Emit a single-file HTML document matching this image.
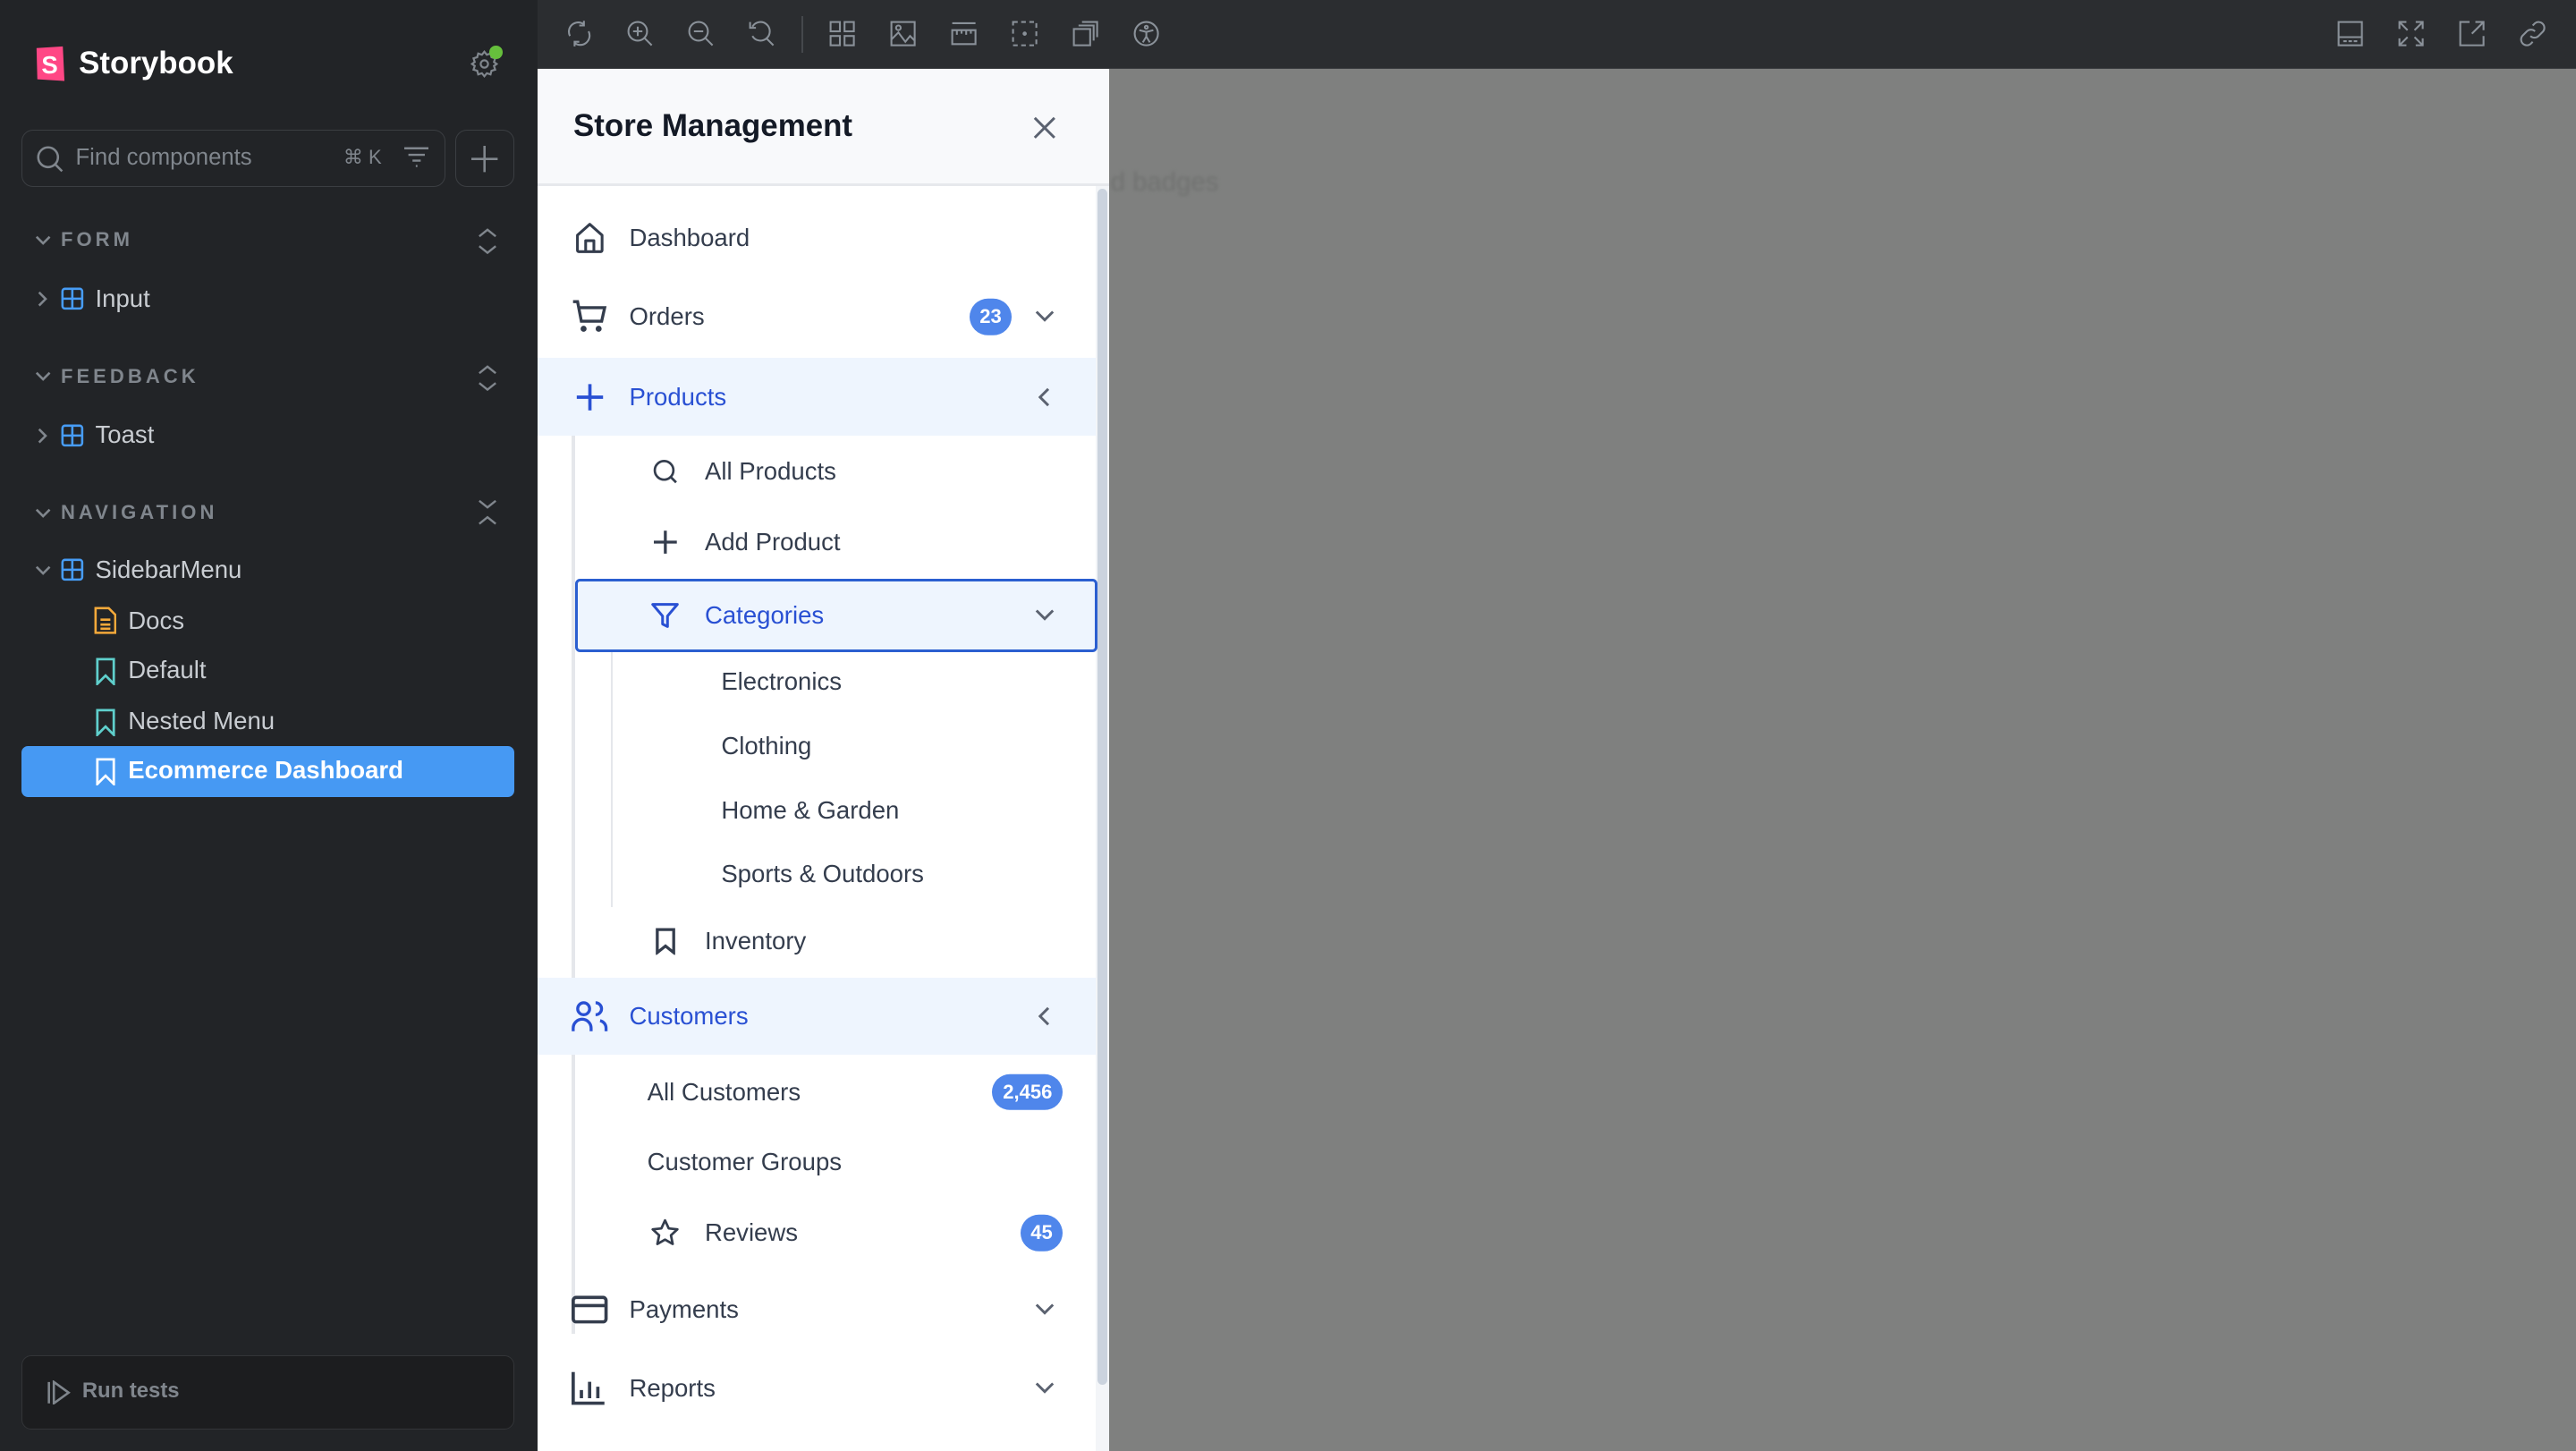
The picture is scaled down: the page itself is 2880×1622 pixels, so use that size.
<!DOCTYPE html>
<html><head><meta charset="utf-8"><style>
*{box-sizing:border-box}
body{margin:0;background:#7f807f;overflow:hidden}
#r{zoom:1.836735;width:1568px;height:883px;position:relative;overflow:hidden;font-family:"Liberation Sans",sans-serif;background:#7f807f}
.abs{position:absolute}
#side{left:0;top:0;width:327px;height:883px;background:#222427}
#tb{left:327px;top:0;width:1241px;height:42px;background:#2b2d30;border-bottom:1px solid #3a3c3f}
.ti{position:absolute;top:12px;width:17px;height:17px}
svg{display:block}
.sec{position:absolute;left:37px;font-size:12px;font-weight:bold;letter-spacing:2.2px;color:#80868d}
.it{position:absolute;font-size:15px;color:#c9cdd2}
#panel{left:327px;top:42px;width:348px;height:841px;background:#fff}
#ph{position:absolute;left:0;top:0;width:348px;height:71px;background:#f8f9fb;border-bottom:2px solid #e6e8ec}
.m{position:absolute;left:0;width:340px;font-size:15px;color:#343d4d}
.m .tx{position:absolute;top:50%;transform:translateY(-50%)}
.m svg{position:absolute;top:50%;transform:translateY(-50%)}
.act{background:#eef5fe;color:#2950d3}
.badge{position:absolute;top:50%;transform:translateY(-50%);background:#4f86eb;color:#fff;font-weight:bold;font-size:12px;border-radius:12px;height:22px;line-height:22px;text-align:center}
</style></head><body><div id="r">

<!-- left sidebar -->
<div id="side" class="abs">
 <svg class="abs" style="left:21px;top:28px" width="20" height="22" viewBox="0 0 20 22"><path d="M1 1.5 L17 0.5 L18 21.5 L1.5 20.5Z" fill="#ff4785"/><text x="4" y="17" font-family="Liberation Sans" font-weight="bold" font-size="15" fill="#fff">S</text></svg>
 <div class="abs" style="left:48px;top:28px;font-size:19px;font-weight:bold;color:#fff">Storybook</div>
 <svg class="abs" style="left:286px;top:30px" width="18" height="18" viewBox="0 0 24 24" fill="none" stroke="#80868d" stroke-width="1.6"><circle cx="12" cy="12" r="3"/><path d="M12 2l2 2.5 3-1 .8 3 3 .9-1 3L22 12l-2.2 1.6 1 3-3 .9-.8 3-3-1L12 22l-2-2.5-3 1-.8-3-3-.9 1-3L2 12l2.2-1.6-1-3 3-.9.8-3 3 1z"/></svg>
 <div class="abs" style="left:298px;top:28px;width:8px;height:8px;border-radius:50%;background:#66bf3c"></div>
 <div class="abs" style="left:13px;top:79px;width:258px;height:35px;border:1px solid #3b3e42;border-radius:7px"></div>
 <svg class="abs" style="left:22px;top:88px" width="17" height="17" viewBox="0 0 17 17" fill="none" stroke="#80868d" stroke-width="1.4"><circle cx="7.5" cy="7.5" r="6"/><path d="M12 12l4 4"/></svg>
 <div class="abs" style="left:46px;top:88px;font-size:14px;color:#80868d">Find components</div>
 <div class="abs" style="left:209px;top:89px;font-size:12px;color:#80868d">⌘ K</div>
 <svg class="abs" style="left:246px;top:89px" width="15" height="13" viewBox="0 0 15 13" stroke="#80868d" stroke-width="1.3"><path d="M0 1.5h15M2.5 5.5h10M5 9h5M7 12.3h1"/></svg>
 <div class="abs" style="left:277px;top:79px;width:36px;height:35px;border:1px solid #3b3e42;border-radius:7px"></div>
 <svg class="abs" style="left:287px;top:89px" width="16" height="16" stroke="#80868d" stroke-width="1.4"><path d="M8 0v16M0 8h16"/></svg>

 <svg class="abs" style="left:21px;top:142px" width="10" height="8" fill="none" stroke="#80868d" stroke-width="1.4"><path d="M1 2l4 4 4-4"/></svg>
 <div class="sec" style="top:139px">FORM</div>
 <svg class="abs" style="left:291px;top:139px" width="12" height="16" fill="none" stroke="#80868d" stroke-width="1.3"><path d="M1 5l5-4 5 4M1 11l5 4 5-4"/></svg>
 <svg class="abs" style="left:22px;top:177px" width="8" height="10" fill="none" stroke="#80868d" stroke-width="1.4"><path d="M2 1l4 4-4 4"/></svg>
 <svg class="abs" style="left:37px;top:175px" width="14" height="14" fill="none" stroke="#479cf5" stroke-width="1.4"><rect x="1" y="1" width="12" height="12" rx="1.5"/><path d="M7 1v12M1 7h12"/></svg>
 <div class="it" style="left:58px;top:173px">Input</div>

 <svg class="abs" style="left:21px;top:225px" width="10" height="8" fill="none" stroke="#80868d" stroke-width="1.4"><path d="M1 2l4 4 4-4"/></svg>
 <div class="sec" style="top:222px">FEEDBACK</div>
 <svg class="abs" style="left:291px;top:222px" width="12" height="16" fill="none" stroke="#80868d" stroke-width="1.3"><path d="M1 5l5-4 5 4M1 11l5 4 5-4"/></svg>
 <svg class="abs" style="left:22px;top:260px" width="8" height="10" fill="none" stroke="#80868d" stroke-width="1.4"><path d="M2 1l4 4-4 4"/></svg>
 <svg class="abs" style="left:37px;top:258px" width="14" height="14" fill="none" stroke="#479cf5" stroke-width="1.4"><rect x="1" y="1" width="12" height="12" rx="1.5"/><path d="M7 1v12M1 7h12"/></svg>
 <div class="it" style="left:58px;top:256px">Toast</div>

 <svg class="abs" style="left:21px;top:308px" width="10" height="8" fill="none" stroke="#80868d" stroke-width="1.4"><path d="M1 2l4 4 4-4"/></svg>
 <div class="sec" style="top:305px">NAVIGATION</div>
 <svg class="abs" style="left:291px;top:304px" width="12" height="16" fill="none" stroke="#80868d" stroke-width="1.3"><path d="M1 1l5 4 5-4M1 15l5-4 5 4"/></svg>
 <svg class="abs" style="left:21px;top:343px" width="10" height="8" fill="none" stroke="#80868d" stroke-width="1.4"><path d="M1 2l4 4 4-4"/></svg>
 <svg class="abs" style="left:37px;top:340px" width="14" height="14" fill="none" stroke="#479cf5" stroke-width="1.4"><rect x="1" y="1" width="12" height="12" rx="1.5"/><path d="M7 1v12M1 7h12"/></svg>
 <div class="it" style="left:58px;top:338px">SidebarMenu</div>
 <svg class="abs" style="left:57px;top:369px" width="14" height="17" fill="none" stroke="#f4a93a" stroke-width="1.4"><path d="M1 1h8l4 4v11H1z M4 8h6M4 11h6M4 13.5h6"/></svg>
 <div class="it" style="left:78px;top:369px">Docs</div>
 <svg class="abs" style="left:58px;top:400px" width="12" height="17" fill="none" stroke="#5fcfcc" stroke-width="1.5"><path d="M1 1h10v15l-5-5-5 5z"/></svg>
 <div class="it" style="left:78px;top:399px">Default</div>
 <svg class="abs" style="left:58px;top:431px" width="12" height="17" fill="none" stroke="#5fcfcc" stroke-width="1.5"><path d="M1 1h10v15l-5-5-5 5z"/></svg>
 <div class="it" style="left:78px;top:430px">Nested Menu</div>
 <div class="abs" style="left:13px;top:454px;width:300px;height:31px;background:#4699f3;border-radius:4px"></div>
 <svg class="abs" style="left:58px;top:461px" width="12" height="17" fill="none" stroke="#fff" stroke-width="1.5"><path d="M1 1h10v15l-5-5-5 5z"/></svg>
 <div class="it" style="left:78px;top:460px;color:#fff;font-weight:bold">Ecommerce Dashboard</div>

 <div class="abs" style="left:13px;top:825px;width:300px;height:45px;background:#1c1d1f;border:1px solid #333538;border-radius:6px"></div>
 <svg class="abs" style="left:28px;top:840px" width="16" height="15" fill="none" stroke="#80868d" stroke-width="1.4"><path d="M2 1v13M5 1l9 6.5L5 14z"/></svg>
 <div class="abs" style="left:50px;top:839px;font-size:13px;font-weight:bold;color:#80868d">Run tests</div>
</div>

<!-- toolbar -->
<div id="tb" class="abs">
 <svg class="ti" style="left:17px" viewBox="0 0 24 24" fill="none" stroke="#8a9199" stroke-width="1.6"><path d="M4 14a8 8 0 0 1 12-10M20 10a8 8 0 0 1-12 10M16 1v4h-4M8 23v-4h4"/></svg>
 <svg class="ti" style="left:54px" viewBox="0 0 24 24" fill="none" stroke="#8a9199" stroke-width="1.6"><circle cx="10" cy="10" r="8"/><path d="M16 16l6 6M10 6v8M6 10h8"/></svg>
 <svg class="ti" style="left:91px" viewBox="0 0 24 24" fill="none" stroke="#8a9199" stroke-width="1.6"><circle cx="10" cy="10" r="8"/><path d="M16 16l6 6M6 10h8"/></svg>
 <svg class="ti" style="left:128px" viewBox="0 0 24 24" fill="none" stroke="#8a9199" stroke-width="1.6"><path d="M4 6a8 8 0 1 1 0 8M16 16l6 6M2 2v5h5"/></svg>
 <div class="abs" style="left:161px;top:10px;width:1px;height:22px;background:#45484c"></div>
 <svg class="ti" style="left:177px" viewBox="0 0 24 24" fill="none" stroke="#8a9199" stroke-width="1.6"><rect x="2" y="2" width="8" height="8"/><rect x="14" y="2" width="8" height="8"/><rect x="2" y="14" width="8" height="8"/><rect x="14" y="14" width="8" height="8"/></svg>
 <svg class="ti" style="left:214px" viewBox="0 0 24 24" fill="none" stroke="#8a9199" stroke-width="1.6"><rect x="2" y="2" width="20" height="20"/><circle cx="8" cy="7" r="2"/><path d="M2 17l6-6 6 8 4-5 4 4"/></svg>
 <svg class="ti" style="left:251px" viewBox="0 0 24 24" fill="none" stroke="#8a9199" stroke-width="1.6"><path d="M2 3h20M2 9h20v12H2zM6 9v4M10 9v3M14 9v4M18 9v3"/></svg>
 <svg class="ti" style="left:288px" viewBox="0 0 24 24" fill="none" stroke="#8a9199" stroke-width="1.6" stroke-dasharray="4 3"><rect x="2" y="2" width="20" height="20"/><circle cx="12" cy="12" r="1" fill="#8a9199" stroke-dasharray="0"/></svg>
 <svg class="ti" style="left:325px" viewBox="0 0 24 24" fill="none" stroke="#8a9199" stroke-width="1.6"><rect x="2" y="8" width="14" height="14"/><path d="M6 5h13v13M9 2h13v13"/></svg>
 <svg class="ti" style="left:362px" viewBox="0 0 24 24" fill="none" stroke="#8a9199" stroke-width="1.6"><circle cx="12" cy="12" r="10"/><circle cx="12" cy="6.5" r="1.3"/><path d="M6 9l6 1.5 6-1.5M12 10.5v4l-3 5M12 14.5l3 5"/></svg>
 <svg class="ti" style="left:1095px" viewBox="0 0 24 24" fill="none" stroke="#8a9199" stroke-width="1.6"><rect x="2" y="2" width="20" height="20"/><path d="M2 15h20M6 18.5h3M10.5 18.5h3M15 18.5h3"/></svg>
 <svg class="ti" style="left:1132px" viewBox="0 0 24 24" fill="none" stroke="#8a9199" stroke-width="1.6"><path d="M2 2l7 7M22 2l-7 7M2 22l7-7M22 22l-7-7M2 8V2h6M16 2h6v6M2 16v6h6M22 16v6h-6"/></svg>
 <svg class="ti" style="left:1169px" viewBox="0 0 24 24" fill="none" stroke="#8a9199" stroke-width="1.6"><path d="M10 2H2v20h20v-8M12 12L22 2M15 2h7v7"/></svg>
 <svg class="ti" style="left:1206px" viewBox="0 0 24 24" fill="none" stroke="#8a9199" stroke-width="1.6"><path d="M10 14a5 5 0 0 0 7 0l4-4a5 5 0 0 0-7-7l-2 2M14 10a5 5 0 0 0-7 0l-4 4a5 5 0 0 0 7 7l2-2"/></svg>
</div>

<div class="abs" style="left:676px;top:102px;font-size:16px;color:#707170;filter:blur(1px)">d badges</div>

<!-- panel -->
<div id="panel" class="abs">
 <div id="ph">
  <div class="abs" style="left:22px;top:24px;font-size:19px;font-weight:bold;color:#141a26">Store Management</div>
  <svg class="abs" style="left:302px;top:29px" width="14" height="14" stroke="#5b6270" stroke-width="1.6"><path d="M1 1l12 12M13 1L1 13"/></svg>
 </div>
 <div class="abs" style="left:340px;top:71px;width:8px;height:770px;background:#f3f5f8"></div>
 <div class="abs" style="left:341px;top:73px;width:6px;height:728px;border-radius:3px;background:#cbd3de"></div>
 <div class="abs" style="left:21px;top:223px;width:2px;height:330px;background:#e5e7eb"></div>
 <div class="abs" style="left:21px;top:600px;width:2px;height:170px;background:#e5e7eb"></div>
 <div class="abs" style="left:45px;top:355px;width:1px;height:155px;background:#e5e7eb"></div>

 <div class="m" style="top:79px;height:48px"><svg style="left:22px" width="20" height="20" viewBox="0 0 24 24" fill="none" stroke="#343d4d" stroke-width="2" stroke-linejoin="round"><path d="M3 10l9-8 9 8v11a1 1 0 0 1-1 1H4a1 1 0 0 1-1-1z M9 22v-8h6v8"/></svg><span class="tx" style="left:56px">Dashboard</span></div>
 <div class="m" style="top:127px;height:48px"><svg style="left:21px" width="22" height="22" viewBox="0 0 24 24" fill="none" stroke="#343d4d" stroke-width="2"><path d="M1 2h3l2.5 13H20l2-9H5"/><circle cx="8" cy="20" r="1" fill="#343d4d"/><circle cx="18" cy="20" r="1" fill="#343d4d"/></svg><span class="tx" style="left:56px">Orders</span><span class="badge" style="left:263px;width:26px">23</span><svg style="left:303px" width="12" height="8" fill="none" stroke="#5b6270" stroke-width="1.6"><path d="M1 1l5 5 5-5"/></svg></div>
 <div class="m act" style="top:176px;height:47px"><svg style="left:23px" width="18" height="18" stroke="#2950d3" stroke-width="2"><path d="M9 1v16M1 9h16"/></svg><span class="tx" style="left:56px">Products</span><svg style="left:305px" width="8" height="12" fill="none" stroke="#5b6270" stroke-width="1.6"><path d="M6 1L1 6l5 5"/></svg></div>
 <div class="m" style="top:224px;height:42px"><svg style="left:70px" width="16" height="16" viewBox="0 0 24 24" fill="none" stroke="#343d4d" stroke-width="2.2"><circle cx="11" cy="11" r="8.5"/><path d="M17 17l5 5"/></svg><span class="tx" style="left:102px">All Products</span></div>
 <div class="m" style="top:267px;height:42px"><svg style="left:71px" width="14" height="14" stroke="#343d4d" stroke-width="1.8"><path d="M7 0v14M0 7h14"/></svg><span class="tx" style="left:102px">Add Product</span></div>
 <div class="abs act" style="left:23px;top:310px;width:318px;height:45px;border:2px solid #2b5fd0;border-radius:3px"></div>
 <div class="m" style="top:310px;height:45px;color:#2950d3"><svg style="left:69px" width="18" height="18" viewBox="0 0 24 24" fill="none" stroke="#2950d3" stroke-width="2.2" stroke-linejoin="round"><path d="M2 3h20l-8 9.5V21l-4-2v-6.5z"/></svg><span class="tx" style="left:102px">Categories</span><svg style="left:303px" width="12" height="8" fill="none" stroke="#5b6270" stroke-width="1.6"><path d="M1 1l5 5 5-5"/></svg></div>
 <div class="m" style="top:353px;height:40px"><span class="tx" style="left:112px">Electronics</span></div>
 <div class="m" style="top:392px;height:40px"><span class="tx" style="left:112px">Clothing</span></div>
 <div class="m" style="top:431px;height:40px"><span class="tx" style="left:112px">Home &amp; Garden</span></div>
 <div class="m" style="top:470px;height:40px"><span class="tx" style="left:112px">Sports &amp; Outdoors</span></div>
 <div class="m" style="top:510px;height:42px"><svg style="left:72px" width="12" height="16" fill="none" stroke="#343d4d" stroke-width="1.8"><path d="M1 1h10v14l-5-4-5 4z"/></svg><span class="tx" style="left:102px">Inventory</span></div>
 <div class="m act" style="top:553px;height:47px"><svg style="left:21px" width="22" height="20" viewBox="0 0 24 22" fill="none" stroke="#2950d3" stroke-width="2"><circle cx="8" cy="6" r="4"/><path d="M1 21v-2a6 6 0 0 1 12 0v2M16 2a4 4 0 0 1 0 8M19 14a5 5 0 0 1 4 5v2"/></svg><span class="tx" style="left:56px">Customers</span><svg style="left:305px" width="8" height="12" fill="none" stroke="#5b6270" stroke-width="1.6"><path d="M6 1L1 6l5 5"/></svg></div>
 <div class="m" style="top:601px;height:43px"><span class="tx" style="left:67px">All Customers</span><span class="badge" style="left:277px;width:43px">2,456</span></div>
 <div class="m" style="top:644px;height:43px"><span class="tx" style="left:67px">Customer Groups</span></div>
 <div class="m" style="top:687px;height:43px"><svg style="left:69px" width="18" height="18" viewBox="0 0 24 24" fill="none" stroke="#343d4d" stroke-width="2" stroke-linejoin="round"><path d="M12 2l3 6.5 7 .8-5.2 4.8 1.4 7L12 17.6 5.8 21.1l1.4-7L2 9.3l7-.8z"/></svg><span class="tx" style="left:102px">Reviews</span><span class="badge" style="left:294px;width:26px">45</span></div>
 <div class="m" style="top:731px;height:48px"><svg style="left:21px" width="22" height="17" viewBox="0 0 22 17" fill="none" stroke="#343d4d" stroke-width="2"><rect x="1" y="1" width="20" height="15" rx="2"/><path d="M1 6h20"/></svg><span class="tx" style="left:56px">Payments</span><svg style="left:303px" width="12" height="8" fill="none" stroke="#5b6270" stroke-width="1.6"><path d="M1 1l5 5 5-5"/></svg></div>
 <div class="m" style="top:779px;height:48px"><svg style="left:21px" width="20" height="20" viewBox="0 0 20 20" fill="none" stroke="#343d4d" stroke-width="2"><path d="M1 0v19h19M6 11v5M11 6v10M16 9v7"/></svg><span class="tx" style="left:56px">Reports</span><svg style="left:303px" width="12" height="8" fill="none" stroke="#5b6270" stroke-width="1.6"><path d="M1 1l5 5 5-5"/></svg></div>
</div>

</div></body></html>
